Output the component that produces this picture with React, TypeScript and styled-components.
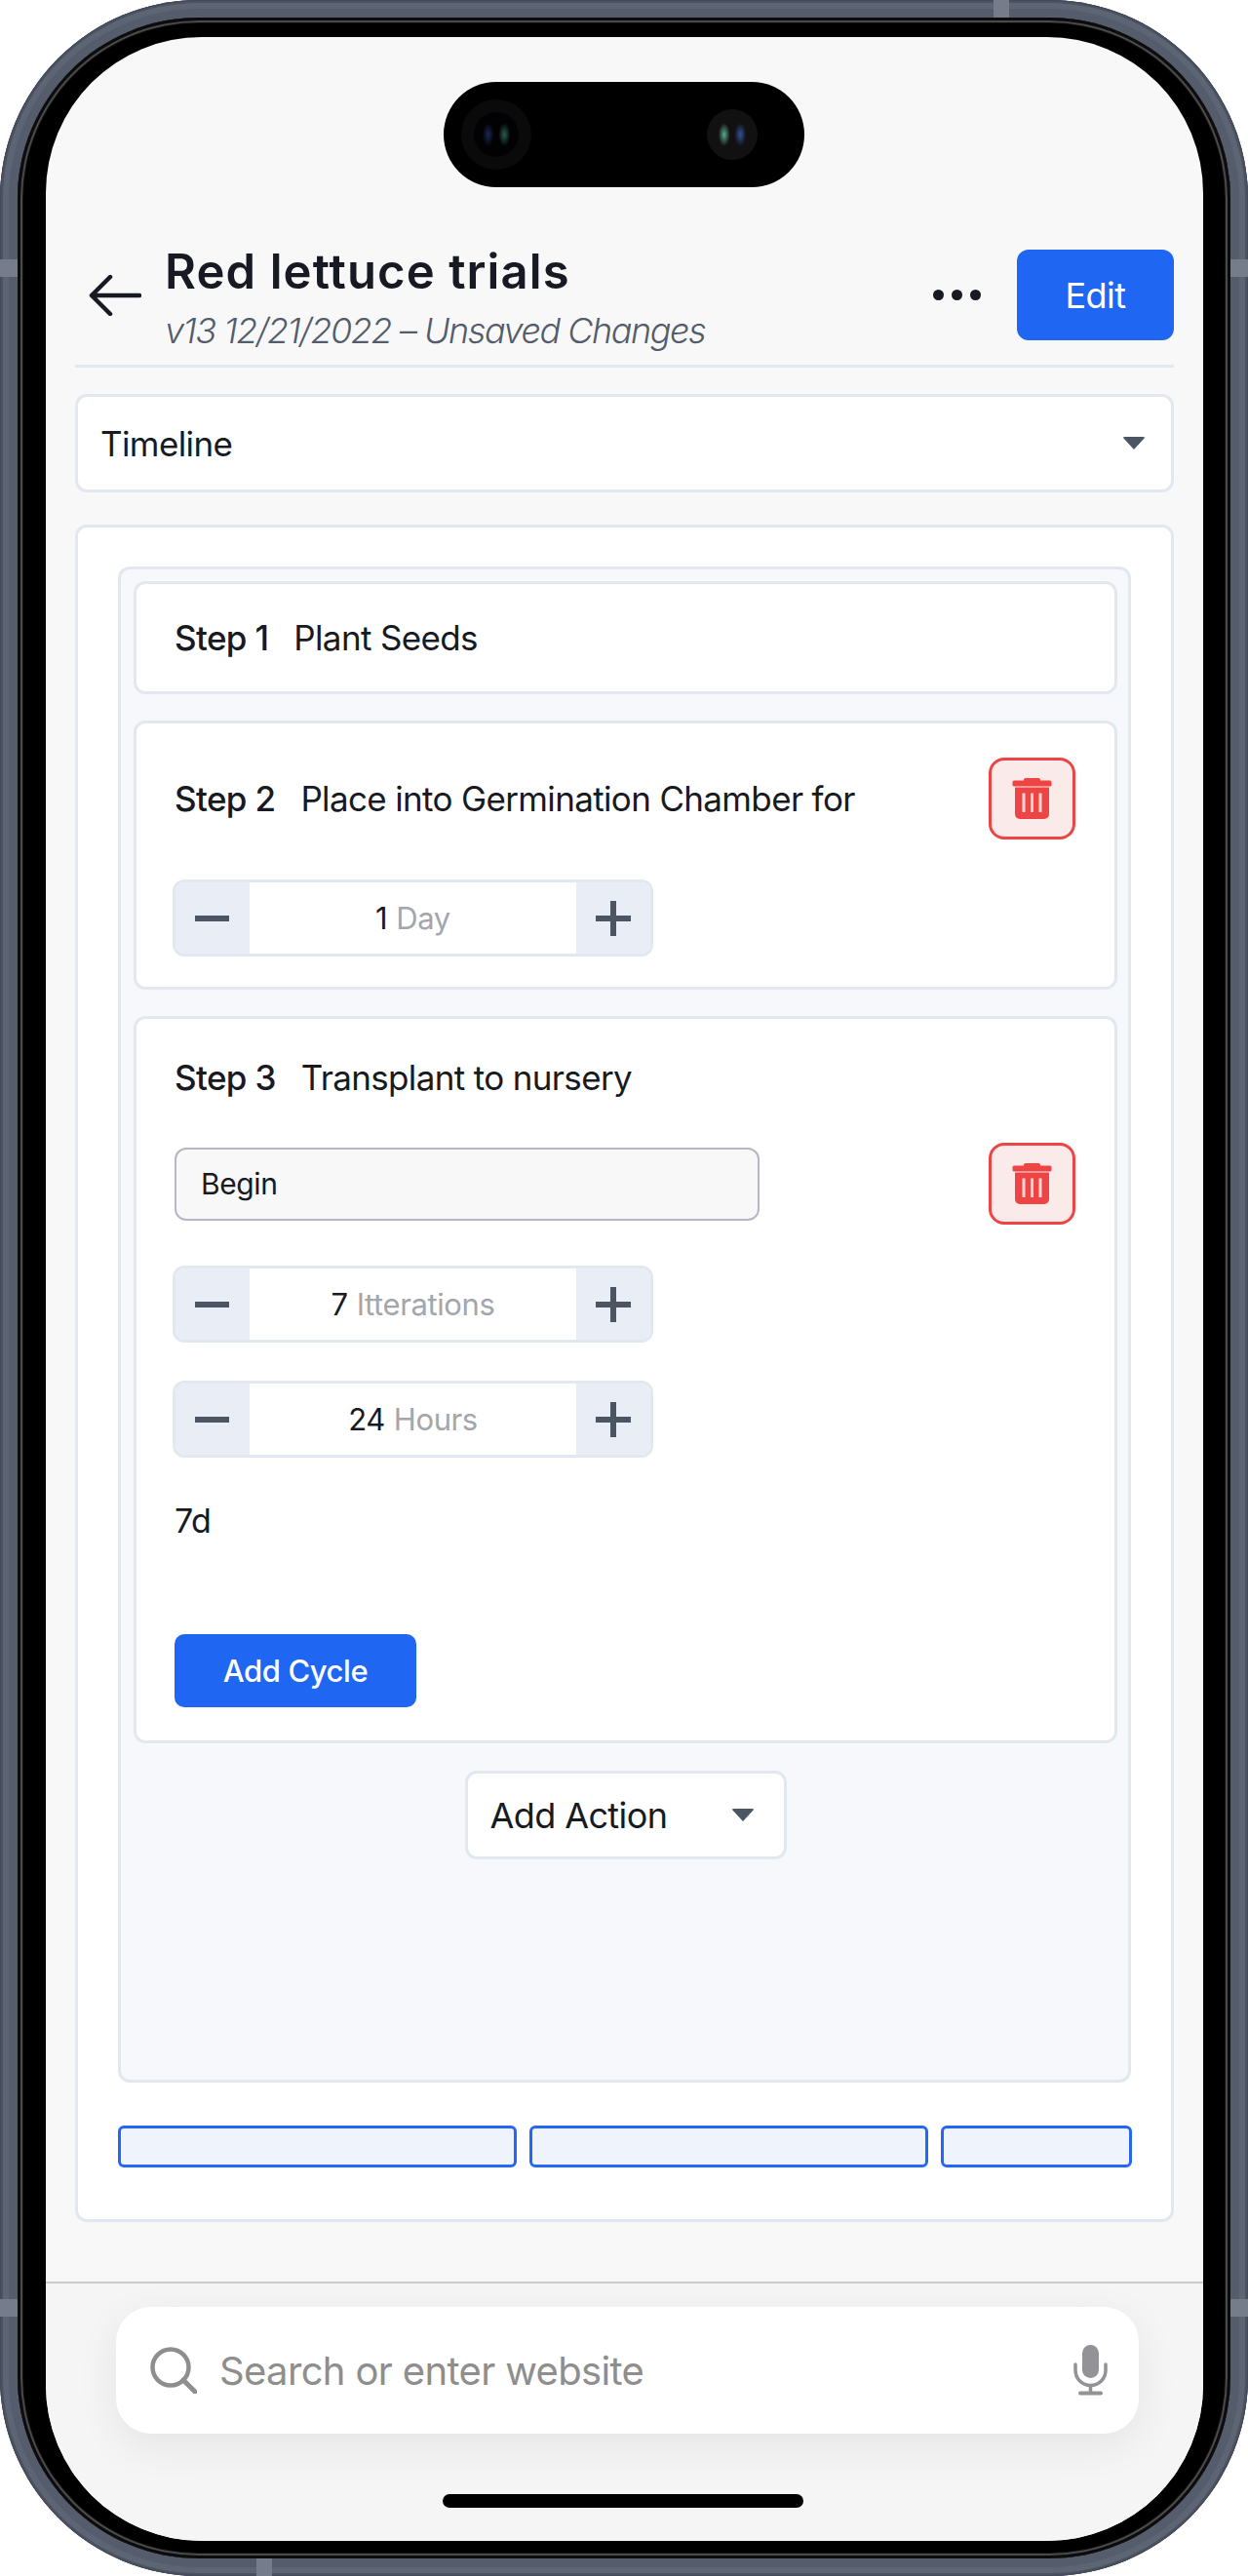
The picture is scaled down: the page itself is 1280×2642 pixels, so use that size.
import * as React from 'react';
import styled, { createGlobalStyle } from 'styled-components';

const GlobalStyle = createGlobalStyle`
  html, body {
    margin: 0;
    padding: 0;
    background: #fff;
  }
  * {
    box-sizing: border-box;
  }
  body {
    font-family: Inter, "Liberation Sans", sans-serif;
    color: #171a22;
  }
`;

const Frame = styled.div`
  position: relative;
  width: 1280px;
  height: 2642px;
  padding: 18px;
  border-radius: 204px;
  background: #555c6c;
  box-shadow: inset 0 0 0 1px #434a59, inset 0 0 0 3px #4b5261, inset 0 0 0 9px #5d6474;
`;

const AntennaBand = styled.span<{ $side: 'left' | 'right' | 'top' | 'bottom'; $at: number }>`
  position: absolute;
  background: #767c8a;
  ${({ $side, $at }) =>
    $side === 'left' || $side === 'right'
      ? `${$side}: 0; top: ${$at}px; width: 18px; height: 18px;`
      : `${$side}: 0; left: ${$at}px; width: 16px; height: 18px;`}
`;

const Bezel = styled.div`
  width: 100%;
  height: 100%;
  padding: 20px 28px 18px 29px;
  border-radius: 186px;
  background: #000;
  box-shadow: inset 0 0 0 3px #0c0c0c, inset 0 0 0 5px #4a4a4a, inset 0 0 0 6px #111;
`;

const Screen = styled.div`
  display: flex;
  flex-direction: column;
  height: 100%;
  border-radius: 160px;
  background: #f8f8f8;
  overflow: hidden;
`;

const Island = styled.div`
  display: flex;
  align-items: center;
  justify-content: space-between;
  flex: none;
  width: 370px;
  height: 108px;
  margin: 46px 0 0 408px;
  padding: 0 48px 0 18px;
  border-radius: 54px;
  background: #000;
`;

const Lens = styled.div<{ $size: number }>`
  display: flex;
  align-items: center;
  justify-content: center;
  width: ${({ $size }) => $size}px;
  height: ${({ $size }) => $size}px;
  border-radius: 50%;
  background: ${({ $size }) => ($size > 60 ? '#0a0a0a' : '#111')};
`;

const LensGlass = styled.div<{ $flip?: boolean; $bright?: boolean }>`
  width: 46px;
  height: 46px;
  border-radius: 50%;
  background: ${({ $flip, $bright }) => {
    const blue = $bright ? '#34509a' : '#1a2850';
    const green = $bright ? '#5aa890' : '#2c5a50';
    return `radial-gradient(ellipse 6px 12px at 32% 50%, ${$flip ? green : blue}, transparent),
      radial-gradient(ellipse 6px 12px at 68% 50%, ${$flip ? blue : green}, transparent),
      ${$bright ? 'transparent' : '#020204'}`;
  }};
`;

const Header = styled.header`
  display: flex;
  align-items: center;
  flex: none;
  height: 141px;
  margin: 44px 30px 0;
  padding-bottom: 5px;
  border-bottom: 3px solid #e2e8f0;
`;

const BackButton = styled.div`
  display: flex;
  flex: none;
  width: 92px;
  padding-left: 14px;
`;

const TitleBlock = styled.div`
  flex: 1;
  min-width: 0;
  margin-top: 6px;
`;

const Title = styled.h1`
  margin: 0;
  font-size: 49px;
  line-height: 56px;
  font-weight: 600;
  letter-spacing: 1.1px;
  color: #171a22;
`;

const Subtitle = styled.p`
  margin: 10px 0 0;
  font-size: 36px;
  line-height: 44px;
  font-weight: 300;
  font-style: italic;
  letter-spacing: -1.45px;
  color: #545c6c;
`;

const Dots = styled.div`
  display: flex;
  gap: 8px;
  margin-right: 37px;
`;

const Dot = styled.span`
  width: 11px;
  height: 11px;
  border-radius: 50%;
  background: #171a22;
`;

const EditButton = styled.button`
  width: 161px;
  height: 93px;
  border: 0;
  border-radius: 12px;
  background: #1f66f2;
  color: #fff;
  font: 400 36px Inter, sans-serif;
  letter-spacing: -0.5px;
`;

const Select = styled.div`
  display: flex;
  align-items: center;
  justify-content: space-between;
  flex: none;
  height: 101px;
  margin: 27px 30px 0;
  padding: 0 26px 0 23px;
  border: 3px solid #e2e8f0;
  border-radius: 12px;
  background: #fff;
  font-size: 35px;
  letter-spacing: -0.6px;
`;

const Caret = styled.span`
  width: 0;
  height: 0;
  border-left: 12px solid transparent;
  border-right: 12px solid transparent;
  border-top: 13px solid #4b5563;
  border-radius: 3px;
`;

const Card = styled.section`
  flex: none;
  height: 1741px;
  margin: 33px 30px 0;
  padding: 40px 41px 0;
  border: 3px solid #e2e8f0;
  border-radius: 12px;
  background: #fff;
`;

const Panel = styled.div`
  height: 1555px;
  padding: 12px 11px 0 13px;
  border: 3px solid #e2e8f0;
  border-radius: 12px;
  background: #f6f8fc;
`;

const StepCard = styled.div<{ $gap?: boolean; $bottom?: number }>`
  margin-top: ${({ $gap }) => ($gap ? 27 : 0)}px;
  padding: 0 40px ${({ $bottom }) => $bottom ?? 0}px 39px;
  border: 3px solid #e2e8f0;
  border-radius: 12px;
  background: #fff;
`;

const StepRow = styled.div<{ $height: number; $top?: number }>`
  display: flex;
  align-items: center;
  justify-content: space-between;
  height: ${({ $height }) => $height}px;
  margin-top: ${({ $top }) => $top ?? 0}px;
`;

const StepText = styled.div`
  font-size: 35px;
  letter-spacing: -0.65px;
  white-space: nowrap;
`;

const StepLabel = styled.span`
  font-weight: 500;
  margin-right: 26px;
`;

const TrashButton = styled.div`
  display: flex;
  align-items: center;
  justify-content: center;
  width: 89px;
  height: 84px;
  border: 3px solid #ef4444;
  border-radius: 16px;
  background: #faeaea;
`;

const Stepper = styled.div<{ $top: number }>`
  display: flex;
  align-items: stretch;
  width: 493px;
  height: 79px;
  margin: ${({ $top }) => $top}px 0 0 -2px;
  border: 3px solid #e2e8f0;
  border-radius: 12px;
  overflow: hidden;
  background: #fff;
`;

const StepperSide = styled.div`
  display: flex;
  align-items: center;
  justify-content: center;
  flex: none;
  width: 76px;
  background: #e9edf6;
`;

const StepperValue = styled.div`
  flex: 1;
  display: flex;
  align-items: center;
  justify-content: center;
  font-size: 31px;
  letter-spacing: -0.4px;
`;

const Unit = styled.span`
  margin-left: 9px;
  color: #a3a6ad;
`;

const BeginInput = styled.div`
  display: flex;
  align-items: center;
  width: 600px;
  height: 75px;
  padding: 0 25px;
  border: 2px solid #b3b8c4;
  border-radius: 12px;
  background: #f8f8f8;
  font-size: 30px;
  letter-spacing: -0.4px;
`;

const Duration = styled.div`
  margin-top: 43px;
  height: 44px;
  line-height: 44px;
  font-size: 34px;
  letter-spacing: -0.5px;
`;

const AddCycleButton = styled.button`
  display: block;
  width: 248px;
  height: 75px;
  margin: 94px 0 34px;
  border: 0;
  border-radius: 10px;
  background: #1f66f2;
  color: #fff;
  font: 500 31px Inter, sans-serif;
  letter-spacing: -0.4px;
`;

const AddAction = styled.div`
  display: flex;
  align-items: center;
  justify-content: space-between;
  width: 330px;
  height: 91px;
  margin: 28px auto 0;
  padding: 0 30px 0 23px;
  border: 3px solid #e2e8f0;
  border-radius: 12px;
  background: #fff;
  font-size: 36px;
  letter-spacing: -0.6px;
`;

const BarRow = styled.div`
  display: grid;
  grid-template-columns: 409px 409px 196px;
  gap: 13px;
  margin-top: 44px;
`;

const Bar = styled.div`
  height: 43px;
  border: 3px solid #2567f5;
  border-radius: 6px;
  background: #eff3fb;
`;

const Toolbar = styled.footer`
  flex: 1;
  display: flex;
  flex-direction: column;
  margin-top: 61px;
  border-top: 2px solid #cbcbcb;
  background: #f5f5f5;
`;

const SearchBar = styled.div`
  display: flex;
  align-items: center;
  height: 130px;
  margin: 24px 66px 0 72px;
  padding: 0 32px 0 35px;
  border-radius: 36px;
  background: #fff;
  box-shadow: 0 12px 44px rgba(0, 0, 0, 0.07);
`;

const SearchText = styled.span`
  flex: 1;
  margin-left: 23px;
  font-size: 40px;
  letter-spacing: -0.65px;
  color: #8e8e8e;
`;

const HomeIndicator = styled.div`
  width: 370px;
  height: 14px;
  margin: 62px 0 0 407px;
  border-radius: 7px;
  background: #000;
`;

const BackIcon = () => (
  <svg width="54" height="42" viewBox="0 0 54 42" fill="none">
    <path
      d="M52 21H3M22 2L3 21l19 19"
      stroke="#171a22"
      strokeWidth="4.5"
      strokeLinecap="round"
      strokeLinejoin="round"
    />
  </svg>
);

const TrashIcon = () => (
  <svg width="41" height="42" viewBox="0 0 41 42">
    <path
      fill="#ef4444"
      d="M14 0h13a2 2 0 0 1 2 2.5h10a1.500 1.500 0 0 1 1.500 1.500v3a1.500 1.500 0 0 1-1.500 1.500H2A1.500 1.500 0 0 1 .5 7V4A1.500 1.500 0 0 1 2 2.500h10A2 2 0 0 1 14 0z"
    />
    <path fill="#ef4444" d="M3 9.500h35V37a5 5 0 0 1-5 5H8a5 5 0 0 1-5-5z" />
    <path fill="#f9d5d5" d="M10.500 15.500h3V35h-3zM19 15.500h3V35h-3zM27.500 15.500h3V35h-3z" />
  </svg>
);

const MinusIcon = () => (
  <svg width="36" height="8" viewBox="0 0 36 8">
    <rect y="1" width="35" height="6" fill="#4b5563" />
  </svg>
);

const PlusIcon = () => (
  <svg width="36" height="36" viewBox="0 0 36 36">
    <path d="M0 15h15V0h6v15h15v6H21v15h-6V21H0z" fill="#4b5563" />
  </svg>
);

const SearchIcon = () => (
  <svg width="48" height="48" viewBox="0 0 48 48" fill="none">
    <circle cx="21" cy="21" r="18.500" stroke="#8e8e8e" strokeWidth="4.500" />
    <path d="M34 34l12 12" stroke="#8e8e8e" strokeWidth="5" strokeLinecap="round" />
  </svg>
);

const MicIcon = () => (
  <svg width="35" height="52" viewBox="0 0 35 52" fill="none">
    <rect x="9" y="0" width="17" height="34" rx="8.500" fill="#929297" />
    <path d="M2 20v6a15.500 15.500 0 0 0 31 0v-6" stroke="#929297" strokeWidth="3.500" strokeLinecap="round" />
    <path d="M17.500 42v7" stroke="#929297" strokeWidth="3.500" />
    <path d="M7 49.500h21" stroke="#929297" strokeWidth="4" strokeLinecap="round" />
  </svg>
);

interface CounterProps {
  value: string;
  unit: string;
  top: number;
}

const Counter = ({ value, unit, top }: CounterProps) => (
  <Stepper $top={top}>
    <StepperSide>
      <MinusIcon />
    </StepperSide>
    <StepperValue>
      {value}
      <Unit>{unit}</Unit>
    </StepperValue>
    <StepperSide>
      <PlusIcon />
    </StepperSide>
  </Stepper>
);

const DeleteButton = () => (
  <TrashButton>
    <TrashIcon />
  </TrashButton>
);

export default function App() {
  return (
    <>
      <GlobalStyle />
      <Frame>
        <AntennaBand $side="left" $at={266} />
        <AntennaBand $side="right" $at={266} />
        <AntennaBand $side="left" $at={2358} />
        <AntennaBand $side="right" $at={2358} />
        <AntennaBand $side="top" $at={1019} />
        <AntennaBand $side="bottom" $at={263} />
        <Bezel>
          <Screen>
            <Island>
              <Lens $size={72}>
                <LensGlass />
              </Lens>
              <Lens $size={52}>
                <LensGlass $flip $bright />
              </Lens>
            </Island>

            <Header>
              <BackButton>
                <BackIcon />
              </BackButton>
              <TitleBlock>
                <Title>Red lettuce trials</Title>
                <Subtitle>v13 12/21/2022 – Unsaved Changes</Subtitle>
              </TitleBlock>
              <Dots>
                <Dot />
                <Dot />
                <Dot />
              </Dots>
              <EditButton>Edit</EditButton>
            </Header>

            <Select>
              Timeline
              <Caret />
            </Select>

            <Card>
              <Panel>
                <StepCard>
                  <StepRow $height={110}>
                    <StepText>
                      <StepLabel>Step 1</StepLabel>Plant Seeds
                    </StepText>
                  </StepRow>
                </StepCard>

                <StepCard $gap $bottom={31}>
                  <StepRow $height={84} $top={35}>
                    <StepText>
                      <StepLabel>Step 2</StepLabel>Place into Germination Chamber for
                    </StepText>
                    <DeleteButton />
                  </StepRow>
                  <Counter value="1" unit="Day" top={41} />
                </StepCard>

                <StepCard $gap>
                  <StepRow $height={44} $top={38}>
                    <StepText>
                      <StepLabel>Step 3</StepLabel>Transplant to nursery
                    </StepText>
                  </StepRow>
                  <StepRow $height={84} $top={45}>
                    <BeginInput>Begin</BeginInput>
                    <DeleteButton />
                  </StepRow>
                  <Counter value="7" unit="Itterations" top={42} />
                  <Counter value="24" unit="Hours" top={39} />
                  <Duration>7d</Duration>
                  <AddCycleButton>Add Cycle</AddCycleButton>
                </StepCard>

                <AddAction>
                  Add Action
                  <Caret />
                </AddAction>
              </Panel>

              <BarRow>
                <Bar />
                <Bar />
                <Bar />
              </BarRow>
            </Card>

            <Toolbar>
              <SearchBar>
                <SearchIcon />
                <SearchText>Search or enter website</SearchText>
                <MicIcon />
              </SearchBar>
              <HomeIndicator />
            </Toolbar>
          </Screen>
        </Bezel>
      </Frame>
    </>
  );
}
